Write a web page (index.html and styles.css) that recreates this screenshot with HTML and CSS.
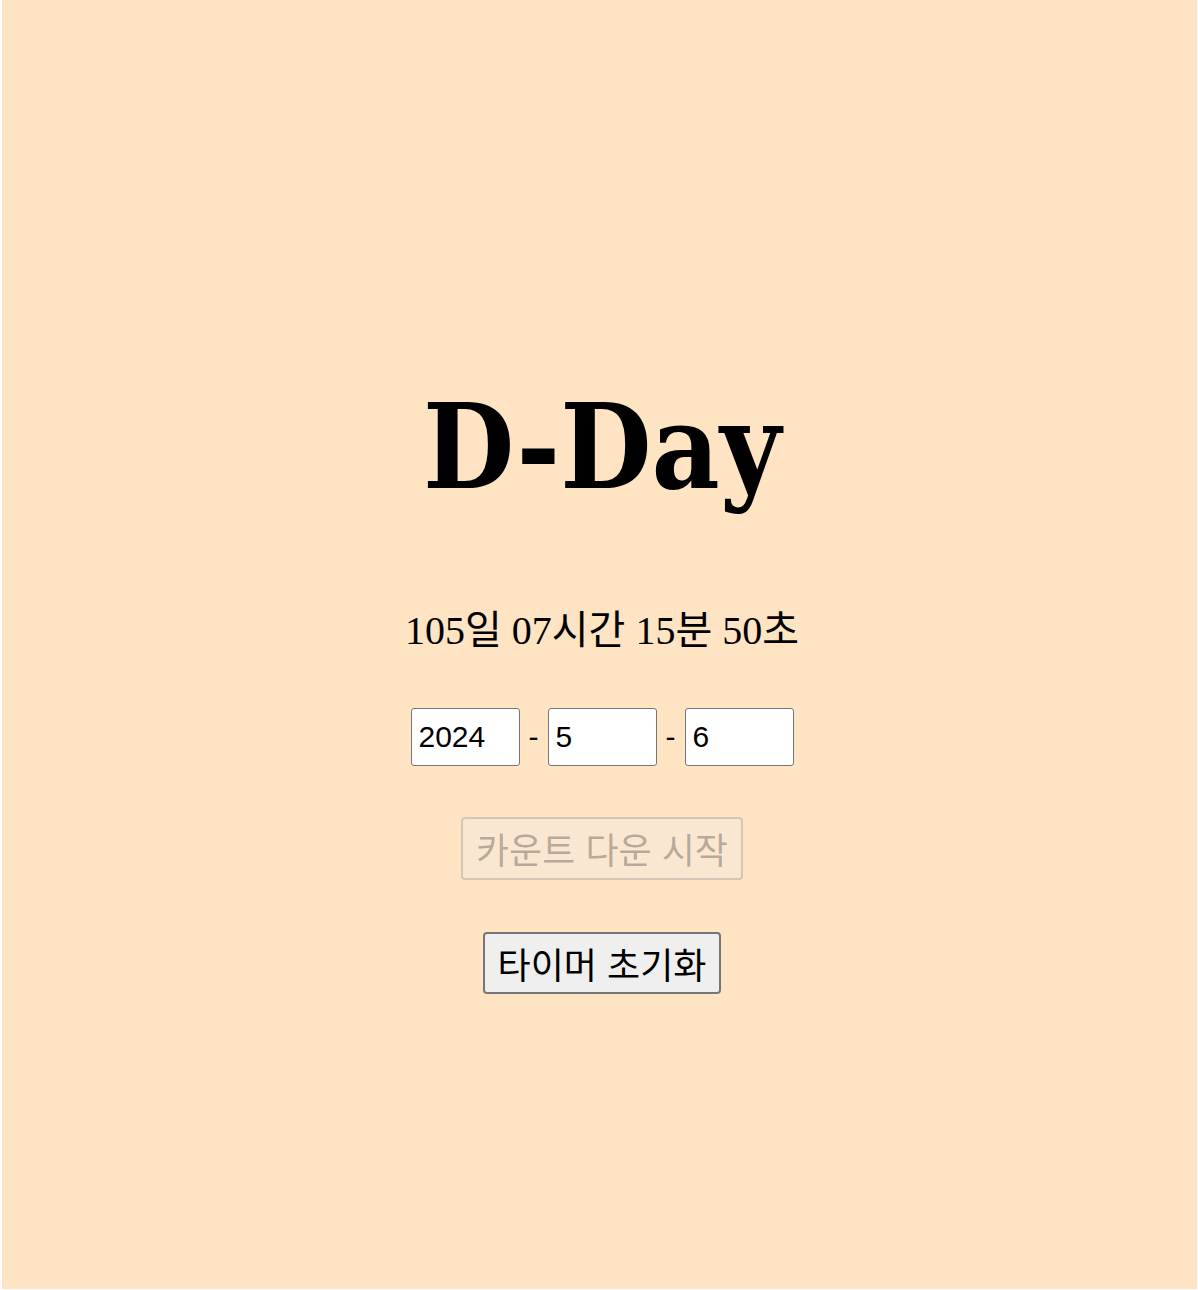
FILE: index.html
```html
<!DOCTYPE html>
<html lang="ko">
<head>
<meta charset="utf-8">
<title>D-Day</title>
<link rel="stylesheet" href="styles.css">
</head>
<body>
<div class="page">
  <h1 class="title">D-Day</h1>
  <div class="timer">105일 07시간 15분 50초</div>
  <div class="inputs">
    <input class="field" type="text" value="2024">
    <span class="sep">-</span>
    <input class="field" type="text" value="5">
    <span class="sep">-</span>
    <input class="field" type="text" value="6">
  </div>
  <button class="btn btn-start" disabled>카운트 다운 시작</button>
  <button class="btn btn-reset">타이머 초기화</button>
</div>
</body>
</html>
```
FILE: styles.css
```css
html, body {
  margin: 0;
  padding: 0;
  background: #ffffff;
}
.page {
  margin: 0 1px 1px 2px;
  height: 1289px;
  background: #ffe4c4;
  display: flex;
  flex-direction: column;
  align-items: center;
  box-sizing: border-box;
  padding-top: 377px;
  padding-left: 5px;
}
.title {
  margin: 0;
  font-family: "DejaVu Serif Condensed", "DejaVu Serif", serif;
  font-stretch: condensed;
  font-weight: bold;
  font-size: 117px;
  line-height: 140px;
}
.timer {
  margin-top: 91px;
  font-family: "Liberation Serif", "Noto Sans CJK KR", serif;
  font-size: 40px;
  line-height: 46px;
}
.inputs {
  margin-top: 54px;
  display: flex;
  align-items: center;
  gap: 9px;
  font-family: "Liberation Sans", sans-serif;
  font-size: 30px;
}
.sep {
  line-height: 58px;
}
.field {
  box-sizing: border-box;
  width: 109px;
  height: 58px;
  margin: 0;
  font-family: "Liberation Sans", sans-serif;
  font-size: 30px;
  padding: 1px 7px;
  border: 1px solid #767676;
  border-radius: 3px;
  background: #fff;
  color: #000;
}
.btn {
  box-sizing: border-box;
  height: 63px;
  font-family: "Noto Sans CJK KR", sans-serif;
  font-size: 36px;
  line-height: 51px;
  padding: 4px 13px;
  border: 2px solid #767676;
  border-radius: 4px;
  background: #efefef;
  color: #000;
}
.btn-start {
  margin-top: 51px;
  background: rgba(239,239,239,0.3);
  border-color: rgba(118,118,118,0.3);
  color: rgba(16,16,16,0.3);
}
.btn-reset {
  margin-top: 52px;
  height: 62px;
}
```
